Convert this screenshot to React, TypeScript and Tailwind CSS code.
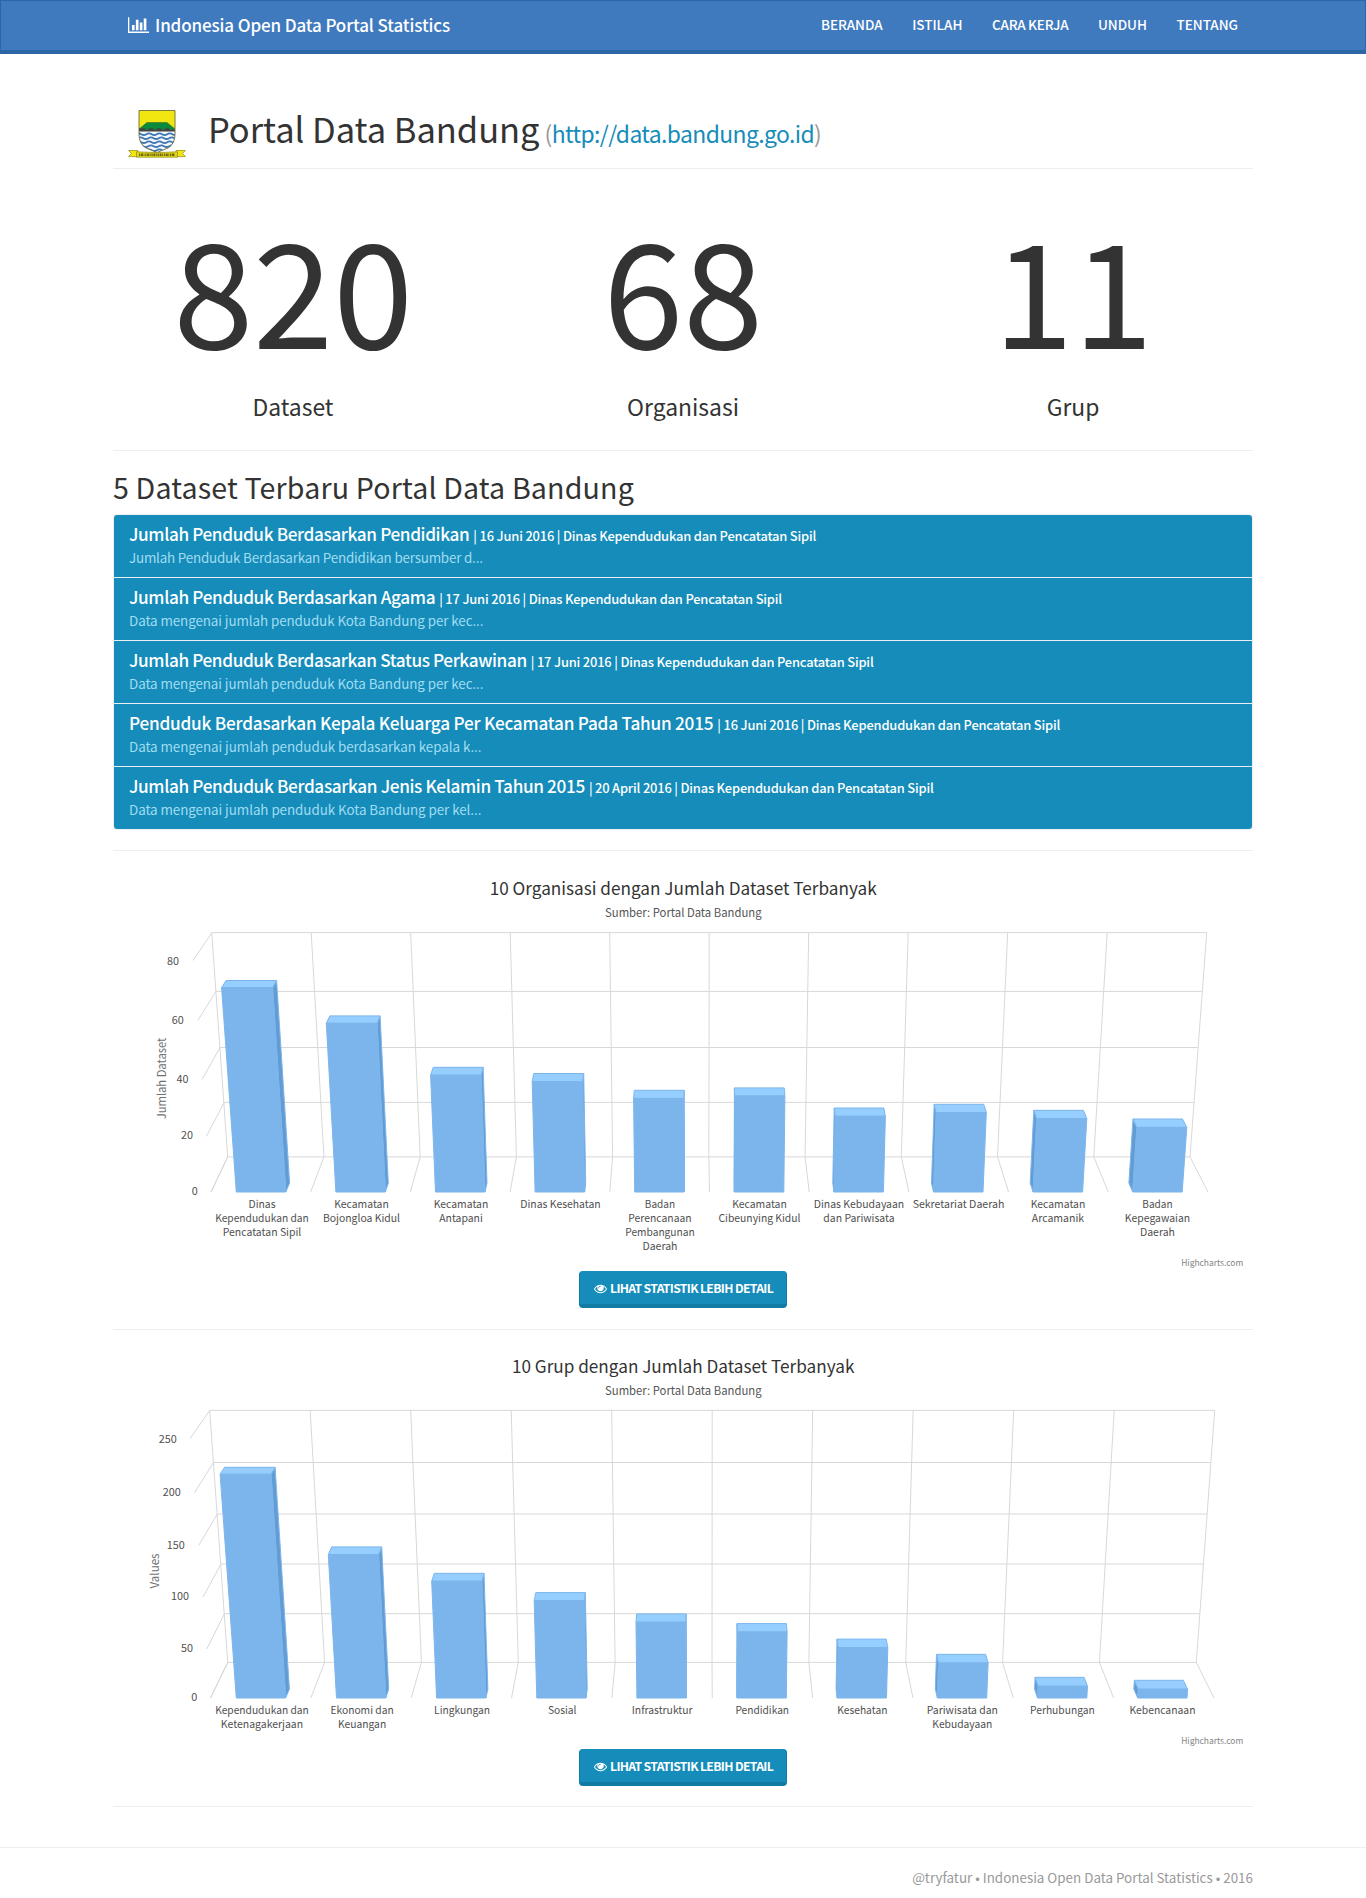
type Item = {
  title: string;
  meta: string;
  text: string;
  titleClass: string;
  textClass: string;
};

type Line = [text: string, width: number];

type Bar = { top: number; labels: Line[] };

type Tick = { label: string; width: number; right: number; base: number; wall: [number, number, number, number] };

type ChartSpec = {
  viewTop: number;
  height: number;
  heading: Line;
  headingBase: number;
  axis: string;
  axisWidth: number;
  axisPos: [number, number];
  center: number;
  floor: number;
  backTop: [number, number];
  backBottom: [number, number];
  front: [number, number];
  /** Horizontal grid lines on the back wall: y, left x, right x */
  rows: [number, number, number][];
  ticks: Tick[];
  firstBar: number;
  pitch: number;
  barWidth: number;
  labelBase: number;
  credits: number;
  bars: Bar[];
};

const items: Item[] = [
  {
    title: 'Jumlah Penduduk Berdasarkan Pendidikan',
    meta: '| 16 Juni 2016 | Dinas Kependudukan dan Pencatatan Sipil',
    text: 'Jumlah Penduduk Berdasarkan Pendidikan bersumber d...',
    titleClass: 'tracking-[-0.38px]',
    textClass: 'tracking-[-0.19px]',
  },
  {
    title: 'Jumlah Penduduk Berdasarkan Agama',
    meta: '| 17 Juni 2016 | Dinas Kependudukan dan Pencatatan Sipil',
    text: 'Data mengenai jumlah penduduk Kota Bandung per kec...',
    titleClass: 'tracking-[-0.36px]',
    textClass: 'tracking-[-0.08px]',
  },
  {
    title: 'Jumlah Penduduk Berdasarkan Status Perkawinan',
    meta: '| 17 Juni 2016 | Dinas Kependudukan dan Pencatatan Sipil',
    text: 'Data mengenai jumlah penduduk Kota Bandung per kec...',
    titleClass: 'tracking-[-0.38px]',
    textClass: 'tracking-[-0.08px]',
  },
  {
    title: 'Penduduk Berdasarkan Kepala Keluarga Per Kecamatan Pada Tahun 2015',
    meta: '| 16 Juni 2016 | Dinas Kependudukan dan Pencatatan Sipil',
    text: 'Data mengenai jumlah penduduk berdasarkan kepala k...',
    titleClass: 'tracking-[-0.23px]',
    textClass: 'tracking-[-0.06px]',
  },
  {
    title: 'Jumlah Penduduk Berdasarkan Jenis Kelamin Tahun 2015',
    meta: '| 20 April 2016 | Dinas Kependudukan dan Pencatatan Sipil',
    text: 'Data mengenai jumlah penduduk Kota Bandung per kel...',
    titleClass: 'tracking-[-0.36px]',
    textClass: 'tracking-[-0.06px]',
  },
];

const organisasi: ChartSpec = {
  viewTop: 851,
  height: 420,
  heading: ['10 Organisasi dengan Jumlah Dataset Terbanyak', 387],
  headingBase: 894.7,
  axis: 'Jumlah Dataset',
  axisWidth: 81.5,
  axisPos: [165.5, 1078.5],
  center: 709.2,
  floor: 1192,
  backTop: [211.7, 1206.7],
  backBottom: [227.7, 1190],
  front: [211, 1208],
  rows: [
    [932.6, 211.7, 1206.7],
    [991.4, 216, 1202.3],
    [1047.5, 220, 1198],
    [1102.4, 224.2, 1194],
    [1156.9, 227.7, 1190],
  ],
  ticks: [
    { label: '80', width: 12, right: 179, base: 965, wall: [193, 960.5, 211.7, 933] },
    { label: '60', width: 12, right: 183.8, base: 1024, wall: [197.8, 1020.5, 216, 991.5] },
    { label: '40', width: 12, right: 188.5, base: 1083, wall: [202.2, 1079.3, 220, 1047.5] },
    { label: '20', width: 12, right: 193, base: 1139, wall: [206.5, 1136, 224.2, 1102.4] },
    { label: '0', width: 6, right: 197.8, base: 1195, wall: [211, 1192, 227.7, 1157] },
  ],
  firstBar: 236.3,
  pitch: 99.6,
  barWidth: 49.5,
  labelBase: 1208,
  credits: 1266,
  bars: [
    { top: 987.6, labels: [['Dinas', 27], ['Kependudukan dan', 93.7], ['Pencatatan Sipil', 78.7]] },
    { top: 1023.3, labels: [['Kecamatan', 54.7], ['Bojongloa Kidul', 77]] },
    { top: 1075.2, labels: [['Kecamatan', 54.7], ['Antapani', 43.5]] },
    { top: 1081.5, labels: [['Dinas Kesehatan', 80.3]] },
    { top: 1098.4, labels: [['Badan', 30.3], ['Perencanaan', 63.3], ['Pembangunan', 69.5], ['Daerah', 35]] },
    { top: 1096, labels: [['Kecamatan', 54.7], ['Cibeunying Kidul', 82]] },
    { top: 1116.3, labels: [['Dinas Kebudayaan', 90.5], ['dan Pariwisata', 71.3]] },
    { top: 1112.5, labels: [['Sekretariat Daerah', 91.7]] },
    { top: 1118.6, labels: [['Kecamatan', 54.7], ['Arcamanik', 52.3]] },
    { top: 1127.4, labels: [['Badan', 30.3], ['Kepegawaian', 65.3], ['Daerah', 35]] },
  ],
};

const grup: ChartSpec = {
  viewTop: 1330,
  height: 419,
  heading: ['10 Grup dengan Jumlah Dataset Terbanyak', 342.5],
  headingBase: 1372.7,
  axis: 'Values',
  axisWidth: 35,
  axisPos: [158.5, 1571],
  center: 711.7,
  floor: 1698,
  backTop: [209.7, 1214.7],
  backBottom: [227.7, 1196.3],
  front: [210.5, 1214],
  rows: [
    [1410.4, 209.7, 1214.7],
    [1462.5, 213.5, 1210.5],
    [1514, 217.3, 1207],
    [1564, 221, 1203.5],
    [1613.7, 224.5, 1200],
    [1662.4, 227.7, 1196.3],
  ],
  ticks: [
    { label: '250', width: 18, right: 176.8, base: 1443, wall: [190, 1438.7, 209.7, 1410.5] },
    { label: '200', width: 18, right: 180.8, base: 1496, wall: [194.5, 1492.7, 213.5, 1462.5] },
    { label: '150', width: 18, right: 184.8, base: 1549, wall: [198.7, 1545.5, 217.3, 1514] },
    { label: '100', width: 18, right: 189, base: 1600, wall: [203, 1597, 221, 1564] },
    { label: '50', width: 12, right: 193, base: 1652, wall: [206.7, 1649, 224.5, 1613.7] },
    { label: '0', width: 6, right: 197.3, base: 1701, wall: [210.5, 1698, 227.7, 1662.5] },
  ],
  firstBar: 236.3,
  pitch: 100.15,
  barWidth: 49.3,
  labelBase: 1714,
  credits: 1744,
  bars: [
    { top: 1474.2, labels: [['Kependudukan dan', 93.7], ['Ketenagakerjaan', 82.3]] },
    { top: 1554.5, labels: [['Ekonomi dan', 63.3], ['Keuangan', 48.3]] },
    { top: 1581.2, labels: [['Lingkungan', 56]] },
    { top: 1600.7, labels: [['Sosial', 28.5]] },
    { top: 1622.2, labels: [['Infrastruktur', 60.7]] },
    { top: 1632, labels: [['Pendidikan', 53.7]] },
    { top: 1647.6, labels: [['Kesehatan', 50.3]] },
    { top: 1663, labels: [['Pariwisata dan', 71.3], ['Kebudayaan', 60]] },
    { top: 1686.2, labels: [['Perhubungan', 64.7]] },
    { top: 1689.2, labels: [['Kebencanaan', 66]] },
  ],
};

function Label({ line, x, y }: { line: Line; x: number; y: number }) {
  return (
    <text x={x - line[1] / 2} y={y} textLength={line[1]} lengthAdjust="spacingAndGlyphs">
      {line[0]}
    </text>
  );
}

function Column({ spec, index }: { spec: ChartSpec; index: number }) {
  const { center, floor, firstBar, pitch, barWidth } = spec;
  const { top } = spec.bars[index];
  const left = firstBar + pitch * index - center;
  const right = left + barWidth;
  const height = floor - top;
  const nearScale = 1 + height * 0.000152;
  const farScale = 0.991 + height * 0.00015;
  const depth = 9 - height * 0.0095;
  const lx = center + left * nearScale;
  const rx = center + right * nearScale;
  const blx = center + left * farScale;
  const brx = center + right * farScale;
  const p = (pts: number[][]) => pts.map((q) => q.map((n) => n.toFixed(1)).join(',')).join(' ');
  const far = 0.991;
  const side =
    left + barWidth / 2 < 0
      ? [[rx, top], [brx, top - depth], [center + right * far, floor - 9], [center + right, floor]]
      : [[lx, top], [blx, top - depth], [center + left * far, floor - 9], [center + left, floor]];
  return (
    <g stroke="#7cb5ec" strokeWidth="1" strokeLinejoin="round">
      <polygon points={p(side)} fill="#639cd3" />
      <polygon points={p([[lx, top], [rx, top], [brx, top - depth], [blx, top - depth]])} fill="#96cfff" />
      <polygon points={p([[lx, top], [rx, top], [center + right, floor], [center + left, floor]])} fill="#7cb5ec" />
    </g>
  );
}

function Chart({ spec }: { spec: ChartSpec }) {
  const cols = Array.from({ length: 11 }, (_, i) => i / 10);
  const at = (r: [number, number], t: number) => r[0] + (r[1] - r[0]) * t;
  const backTopY = spec.rows[0][0];
  const backBottomY = spec.rows[spec.rows.length - 1][0];
  return (
    <svg
      className="block w-[1140px]"
      height={spec.height}
      viewBox={`113 ${spec.viewTop} 1140 ${spec.height}`}
    >
      <g stroke="#d8d8d8" strokeWidth="1" fill="none">
        {spec.rows.map(([y, l, r]) => (
          <line key={y} x1={l} x2={r} y1={y} y2={y} />
        ))}
        {cols.map((t) => (
          <polyline
            key={t}
            points={`${at(spec.backTop, t)},${backTopY} ${at(spec.backBottom, t)},${backBottomY} ${at(spec.front, t)},${spec.floor}`}
          />
        ))}
        {spec.ticks.map(({ label, wall }) => (
          <line key={label} x1={wall[0]} y1={wall[1]} x2={wall[2]} y2={wall[3]} />
        ))}
      </g>
      {spec.bars.map((_, i) => (
        <Column key={i} spec={spec} index={i} />
      ))}
      <g fill="#333333" fontSize="17.2">
        <Label line={spec.heading} x={683.2} y={spec.headingBase} />
      </g>
      <g fill="#555555" fontSize="11.7">
        <Label line={['Sumber: Portal Data Bandung', 156.5]} x={683.3} y={spec.headingBase + 22.3} />
      </g>
      <g fill="#505050" fontSize="10.8">
        {spec.ticks.map((t) => (
          <Label key={t.label} line={[t.label, t.width]} x={t.right - t.width / 2} y={t.base} />
        ))}
        {spec.bars.map((bar, i) =>
          bar.labels.map((line, j) => (
            <Label
              key={`${i}-${j}`}
              line={line}
              x={spec.firstBar + 25.7 + (spec.pitch - 0.1) * i}
              y={spec.labelBase + 14 * j}
            />
          )),
        )}
      </g>
      <g fill="#707070" fontSize="11.7" transform={`translate(${spec.axisPos[0]} ${spec.axisPos[1]}) rotate(-90)`}>
        <Label line={[spec.axis, spec.axisWidth]} x={0} y={0} />
      </g>
      <g fill="#858585" fontSize="8.8">
        <Label line={['Highcharts.com', 62]} x={1212.2} y={spec.credits} />
      </g>
    </svg>
  );
}

function DetailButton() {
  return (
    <button className="mx-auto flex h-[37px] w-[208px] items-start rounded-[4px] border-x border-b-4 border-[#127ba3] bg-[#158cba] pl-[14px] text-[12.2px] leading-[34px] font-bold tracking-[-0.66px] whitespace-nowrap text-white">
      <svg className="mt-[11px] mr-[3px] size-[13px] shrink-0" viewBox="0 0 1792 1792" fill="currentColor">
        <path d="M1664 960q-152-236-381-353 61 104 61 225 0 185-131.5 316.5t-316.5 131.5-316.5-131.5-131.5-316.5q0-121 61-225-229 117-381 353 133 205 333.5 326.5t434.5 121.5 434.5-121.5 333.5-326.5zm-720-384q0-20-14-34t-34-14q-125 0-214.5 89.5t-89.5 214.5q0 20 14 34t34 14 34-14 14-34q0-86 61-147t147-61q20 0 34-14t14-34zm848 384q0 34-20 69-140 230-376.5 368.5t-499.5 138.5-499.5-139-376.5-368q-20-35-20-69t20-69q140-229 376.5-368t499.5-139 499.5 139 376.5 368q20 35 20 69z" />
      </svg>
      LIHAT STATISTIK LEBIH DETAIL
    </button>
  );
}

function Crest() {
  return (
    <svg className="mt-[2px] ml-[15px] h-[48px] w-[58px] shrink-0" viewBox="0 0 58 48">
      <clipPath id="shield">
        <path d="M11 .5H47V24Q47 34 40 38L29 42.5L18 38Q11 34 11 24Z" />
      </clipPath>
      <g clipPath="url(#shield)">
        <rect width="58" height="48" fill="#f4f7fa" />
        <rect width="58" height="20" fill="#f1e60f" />
        <path d="M11 19L19 12.5H39L47 19V20H11Z" fill="#0b8a3c" stroke="#3d6b2c" strokeWidth=".6" />
        <path d="M11 18.2H17V19.8H21V18.2H25V19.8H29V18.2H33V19.8H37V18.2H41V19.8H47V21.6H11Z" fill="#444" />
        <g fill="none" stroke="#3f79b5" strokeWidth="1.9">
          <path d="M8 24.2q2.6-1.6 5.2 0t5.2 0 5.2 0 5.2 0 5.2 0 5.2 0 5.2 0 5.2 0" />
          <path d="M10 28.2q2.6-1.6 5.2 0t5.2 0 5.2 0 5.2 0 5.2 0 5.2 0 5.2 0 5.2 0" />
          <path d="M8 32.2q2.6-1.6 5.2 0t5.2 0 5.2 0 5.2 0 5.2 0 5.2 0 5.2 0 5.2 0" />
          <path d="M10 36.2q2.6-1.6 5.2 0t5.2 0 5.2 0 5.2 0 5.2 0 5.2 0 5.2 0 5.2 0" />
          <path d="M8 40.2q2.6-1.6 5.2 0t5.2 0 5.2 0 5.2 0 5.2 0 5.2 0 5.2 0 5.2 0" />
        </g>
      </g>
      <path d="M11 .5H47V24Q47 34 40 38L29 42.5L18 38Q11 34 11 24Z" fill="none" stroke="#6a6d3a" strokeWidth=".9" />
      <path d="M.6 40.5H10V46.6H.6L3.4 43.5ZM57.4 40.5H48V46.6H57.4L54.6 43.5Z" fill="#f1e60f" stroke="#8f8a1c" strokeWidth=".7" />
      <path d="M8.5 41.8Q29 43.4 49.5 41.8V47.2H8.5Z" fill="#e3d815" stroke="#8f8a1c" strokeWidth=".7" />
      <path d="M11 44.8H47" stroke="#6b6614" strokeWidth="2.4" strokeDasharray="1.3 .7 2 .6 .8 .8" />
    </svg>
  );
}

export default function App() {
  return (
    <div className="h-[1898px] w-[1366px] overflow-hidden bg-white font-['Noto_Sans_CJK_JP','Noto_Sans',sans-serif] text-[#333333]">
      <nav className="h-[54px] border border-b-4 border-[#2d66a6] bg-[#3f7abf] text-white">
        <div className="mx-auto flex w-[1140px] items-start justify-between px-[15px]">
          <a className="flex text-[17px] leading-[47px] font-medium tracking-[-0.12px]">
            <svg className="mt-[16px] mr-[6px] h-[16px] w-[21px]" viewBox="0 0 2048 1536" fill="currentColor">
              <path d="M640 768v512H384V768h256zm384-512v1024H768V256h256zm1024 1152v128H0V0h128v1408h1920zm-640-896v768h-256V512h256zm384-384v1152h-256V128h256z" />
            </svg>
            Indonesia Open Data Portal Statistics
          </a>
          <div className="flex gap-[29.6px] text-[13.5px] leading-[46px] font-medium tracking-[-0.03px]">
            <a>BERANDA</a>
            <a>ISTILAH</a>
            <a className="tracking-[-0.25px]">CARA KERJA</a>
            <a>UNDUH</a>
            <a>TENTANG</a>
          </div>
        </div>
      </nav>

      <main className="mx-auto w-[1140px]">
        <header className="flex h-[115px] border-b border-[#eeeeee] pt-[54px]">
          <Crest />
          <h1 className="ml-[22px] text-[34.5px] leading-[40px] tracking-[-0.04px] whitespace-nowrap">
            Portal Data Bandung
            <small className="ml-[5px] text-[22.9px] tracking-[-0.6px] text-[#999999]">
              (<a className="text-[#158cba]">http://data.bandung.go.id</a>)
            </small>
          </h1>
        </header>

        <section className="h-[282px] border-b border-[#eeeeee] pt-[42px]">
          <div className="-mx-[15px] grid grid-cols-3 text-center">
            {[
              ['820', 'Dataset'],
              ['68', 'Organisasi'],
              ['11', 'Grup'],
            ].map(([value, name]) => (
              <div key={name}>
                <div className="text-[144.5px] leading-[150px] tracking-[-0.4px]">{value}</div>
                <div className="mt-[30px] text-[22.9px] leading-[30px]">{name}</div>
              </div>
            ))}
          </div>
        </section>

        <section className="h-[400px] border-b border-[#eeeeee] pt-[16px]">
          <h2 className="text-[28.6px] leading-[40px] tracking-[0.15px]">5 Dataset Terbaru Portal Data Bandung</h2>
          <div className="mt-[7px] flex flex-col divide-y divide-[#eceff1] overflow-hidden rounded-[4px] border border-[#eceff1]">
            {items.map((item) => (
              <div key={item.title} className="h-[63px] bg-[#158cba] px-[15px] pt-[7px] last:h-[62px]">
                <div className="text-[17.2px] leading-[24px] font-medium whitespace-nowrap text-white">
                  <span className={item.titleClass}>{item.title}</span>
                  <small className="ml-[4px] text-[12.9px] tracking-[-0.18px]">{item.meta}</small>
                </div>
                <p className="-mt-px text-[13.4px] leading-[20px] text-[#a1dcf2]">
                  <span className={item.textClass}>{item.text}</span>
                </p>
              </div>
            ))}
          </div>
        </section>

        <section className="h-[479px] border-b border-[#eeeeee]">
          <Chart spec={organisasi} />
          <DetailButton />
        </section>

        <section className="h-[477px] border-b border-[#eeeeee]">
          <Chart spec={grup} />
          <DetailButton />
        </section>
      </main>

      <footer className="mt-[40px] border-t border-[#eeeeee] pt-[19px]">
        <p className="mx-auto w-[1140px] text-right text-[13.4px] leading-[20px] text-[#999999]">
          @tryfatur • Indonesia Open Data Portal Statistics • 2016
        </p>
      </footer>
    </div>
  );
}
